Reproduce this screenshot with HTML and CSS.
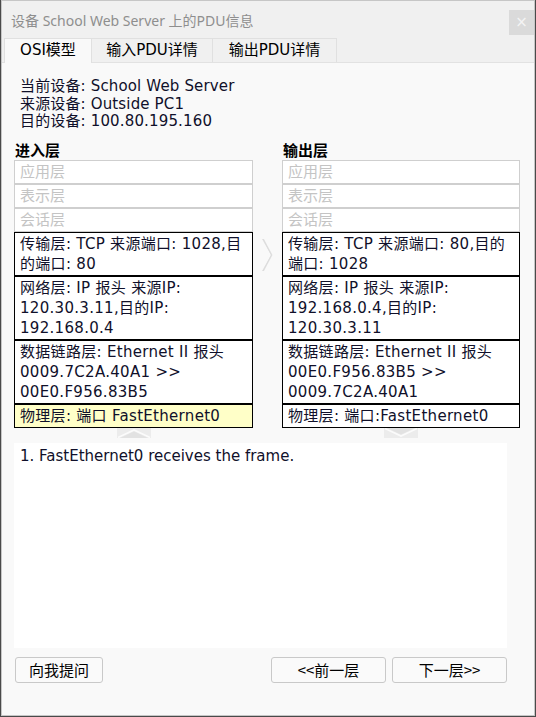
FILE: index.html
```html
<!DOCTYPE html>
<html lang="zh">
<head>
<meta charset="utf-8">
<title>PDU信息</title>
<link rel="stylesheet" href="styles.css">
</head>
<body>
<div class="window">
  <div class="titlebar">
    <span class="title">设备 School Web Server 上的PDU信息</span>
    <span class="close">×</span>
  </div>
  <div class="tabs">
    <div class="tab active">OSI模型</div>
    <div class="tab t2">输入PDU详情</div>
    <div class="tab t3">输出PDU详情</div>
  </div>
  <div class="panel">
    <div class="info">
      <div>当前设备: School Web Server</div>
      <div>来源设备: Outside PC1</div>
      <div>目的设备: 100.80.195.160</div>
    </div>
    <div class="layers">
      <div class="col">
        <div class="head">进入层</div>
        <div class="box off">应用层</div>
        <div class="box off">表示层</div>
        <div class="box off">会话层</div>
        <div class="box">传输层: TCP 来源端口: 1028,目的端口: 80</div>
        <div class="box">网络层: IP 报头 来源IP: 120.30.3.11,目的IP: 192.168.0.4</div>
        <div class="box">数据链路层: Ethernet II 报头 0009.7C2A.40A1 &gt;&gt; 00E0.F956.83B5</div>
        <div class="box sel">物理层: 端口 FastEthernet0</div>
        <div class="arrow">
          <svg width="34" height="10" viewBox="0 0 34 10"><rect x="0" y="0" width="34" height="10" fill="#ececec"/><polyline points="1,9.5 17,2 33,9.5" fill="none" stroke="#fbfbfb" stroke-width="1.6"/><polyline points="3,10 17,3.5 31,10" fill="#e2e2e2" stroke="none"/></svg>
        </div>
      </div>
      <div class="mid">
        <svg width="12" height="34" viewBox="0 0 12 34"><polygon points="1,1 10,17 1,33 3,33 11.5,17 3,1" fill="#e4e4e4"/><polyline points="2,1 10.5,17 2,33" fill="none" stroke="#dcdcdc" stroke-width="1"/></svg>
      </div>
      <div class="col">
        <div class="head">输出层</div>
        <div class="box off">应用层</div>
        <div class="box off">表示层</div>
        <div class="box off">会话层</div>
        <div class="box">传输层: TCP 来源端口: 80,目的端口: 1028</div>
        <div class="box">网络层: IP 报头 来源IP: 192.168.0.4,目的IP: 120.30.3.11</div>
        <div class="box">数据链路层: Ethernet II 报头 00E0.F956.83B5 &gt;&gt; 0009.7C2A.40A1</div>
        <div class="box">物理层: 端口:FastEthernet0</div>
        <div class="arrow">
          <svg width="34" height="10" viewBox="0 0 34 10"><rect x="0" y="0" width="34" height="10" fill="#ececec"/><polyline points="1,0.5 17,8 33,0.5" fill="none" stroke="#fbfbfb" stroke-width="1.6"/><polyline points="3,0 17,6.5 31,0" fill="#e2e2e2" stroke="none"/></svg>
        </div>
      </div>
    </div>
    <div class="notes">1. FastEthernet0 receives the frame.</div>
    <div class="buttons">
      <button class="btn ask">向我提问</button>
      <div class="nav">
        <button class="btn step">&lt;&lt;前一层</button>
        <button class="btn step">下一层&gt;&gt;</button>
      </div>
    </div>
  </div>
</div>
</body>
</html>
```

FILE: styles.css
```css
* { box-sizing: border-box; }
html, body { margin: 0; padding: 0; }
body {
  background: #4a4a4a;
  width: 536px;
  height: 717px;
  overflow: hidden;
}
.window {
  margin-left: 1px;
  width: 534px;
  height: 716px;
  border: 1px solid #c6c6c6;
  background: #f9f9f9;
  display: flex;
  flex-direction: column;
  font-family: "DejaVu Sans", "Noto Sans CJK SC", sans-serif;
  color: #10102a;
}
.titlebar {
  height: 36px;
  background: #f0f0f0;
  display: flex;
  align-items: center;
  justify-content: space-between;
  padding-left: 9px;
}
.title {
  font-family: "Noto Sans", "Noto Sans CJK SC", sans-serif;
  font-size: 14px;
  color: #8e8e8e;
  margin-top: 2px;
}
.close {
  width: 25px;
  height: 25px;
  margin-top: 6px;
  background: #dadada;
  color: #f4f4f4;
  font-family: "DejaVu Sans", sans-serif;
  font-size: 15px;
  display: flex;
  align-items: center;
  justify-content: center;
}
.tabs {
  display: flex;
  background: #f0f0f0;
  padding: 1px 0 0 2px;
  border-bottom: 1px solid #e2e2e2;
}
.tab {
  height: 24px;
  line-height: 23px;
  font-size: 15px;
  color: #000;
  text-align: center;
  border: 1px solid #e0e0e0;
  border-bottom: none;
  border-left: none;
  background: #f0f0f0;
}
.tab.active {
  width: 88px;
  background: #f9f9f9;
  border-left: 1px solid #e0e0e0;
  margin-bottom: -1px;
  height: 25px;
}
.tab.t2 { width: 121px; }
.tab.t3 { width: 124px; }
.panel {
  flex: 1;
  padding: 15px 0 0 12px;
  display: flex;
  flex-direction: column;
}
.info {
  font-size: 15px;
  line-height: 17.5px;
  padding-left: 6px;
  letter-spacing: 0.15px;
}
.layers {
  display: grid;
  grid-template-columns: 239px 29px 238px;
  margin-top: 12px;
}
.head {
  font-weight: bold;
  font-size: 15px;
  line-height: 17px;
  color: #000;
  padding-left: 1px;
}
.box {
  border: 1px solid #000;
  font-size: 15px;
  line-height: 20px;
  padding: 1px 4px 1px 5px;
  background: #fff;
  letter-spacing: 0.3px;
}
.box.off {
  border-color: #cfcfcf;
  color: #c4c4c4;
  letter-spacing: 0;
}
.box.sel { background: #ffffc8; }
.arrow {
  height: 10px;
  display: flex;
  justify-content: center;
}
.arrow svg { display: block; }
.mid {
  padding-top: 95px;
  display: flex;
  justify-content: center;
}
.mid svg { display: block; margin-left: -1px; }
.notes {
  margin-top: 5px;
  width: 493px;
  height: 205px;
  background: #fff;
  font-size: 15px;
  line-height: 17px;
  padding: 5px 6px;
}
.buttons {
  margin-top: 9px;
  display: flex;
  justify-content: space-between;
  width: 493px;
  padding-left: 1px;
}
.nav { display: flex; gap: 6px; }
.btn {
  height: 26px;
  border: 1px solid #c9c9c9;
  border-radius: 3px;
  background: #fafafa;
  font-family: "Noto Sans CJK SC", "DejaVu Sans", sans-serif;
  font-size: 15px;
  color: #000;
  padding: 0;
  line-height: 24px;
}
.btn.ask { width: 88px; }
.btn.step { width: 115px; }
```
